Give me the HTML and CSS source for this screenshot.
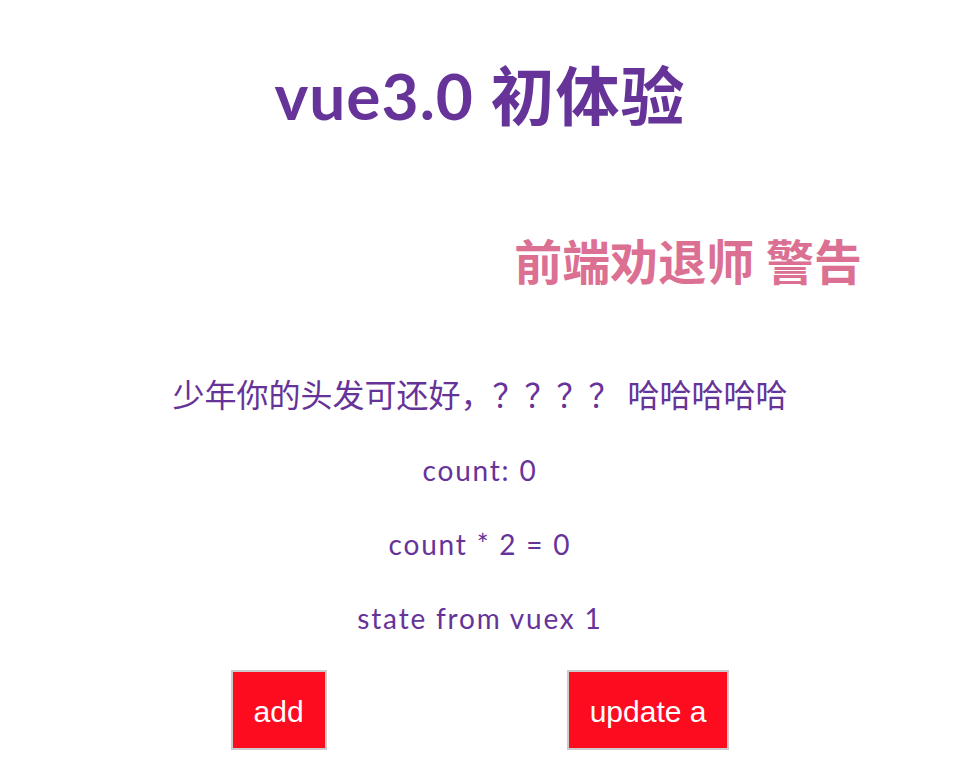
FILE: index.html
```html
<!DOCTYPE html>
<html lang="zh">
<head>
<meta charset="utf-8">
<title>vue3.0 初体验</title>
<link rel="stylesheet" href="styles.css">
</head>
<body>
<div class="app">
  <h1 class="title">vue3.0 初体验</h1>
  <h2 class="warn">前端劝退师 警告</h2>
  <p class="hair">少年你的头发可还好，？？？？ 哈哈哈哈哈</p>
  <p class="line">count: 0</p>
  <p class="line">count * 2 = 0</p>
  <p class="line">state from vuex 1</p>
  <div class="actions">
    <button class="btn">add</button>
    <button class="btn">update a</button>
  </div>
</div>
</body>
</html>
```
FILE: styles.css
```css
html, body {
  margin: 0;
  padding: 0;
  background: #ffffff;
}
.app {
  font-family: Lato, "Noto Sans CJK SC", sans-serif;
  color: #663399;
  text-align: center;
  padding-top: 58px;
}
.title {
  font-size: 64px;
  line-height: 76px;
  font-weight: 700;
  letter-spacing: 1px;
  margin: 0;
  color: #663399;
}
.warn {
  font-size: 48px;
  line-height: 56px;
  font-weight: 700;
  color: #db7093;
  text-align: right;
  margin: 100px 98px 0 0;
}
.hair {
  font-family: "Noto Sans CJK SC", sans-serif;
  font-size: 32px;
  line-height: 40px;
  margin: 83px 0 0;
  font-weight: 400;
}
.line {
  font-size: 28px;
  line-height: 34px;
  letter-spacing: 1.8px;
  margin: 40px 0 0;
}
.actions {
  display: flex;
  justify-content: center;
  gap: 240px;
  margin-top: 35px;
}
.btn {
  font-family: "Liberation Sans", Arial, sans-serif;
  font-size: 30px;
  line-height: 36px;
  color: #ffffff;
  background: #fd0c1f;
  border: 2px solid #cccccc;
  height: 80px;
  padding: 4px 21px 0;
  margin: 0;
}
```
